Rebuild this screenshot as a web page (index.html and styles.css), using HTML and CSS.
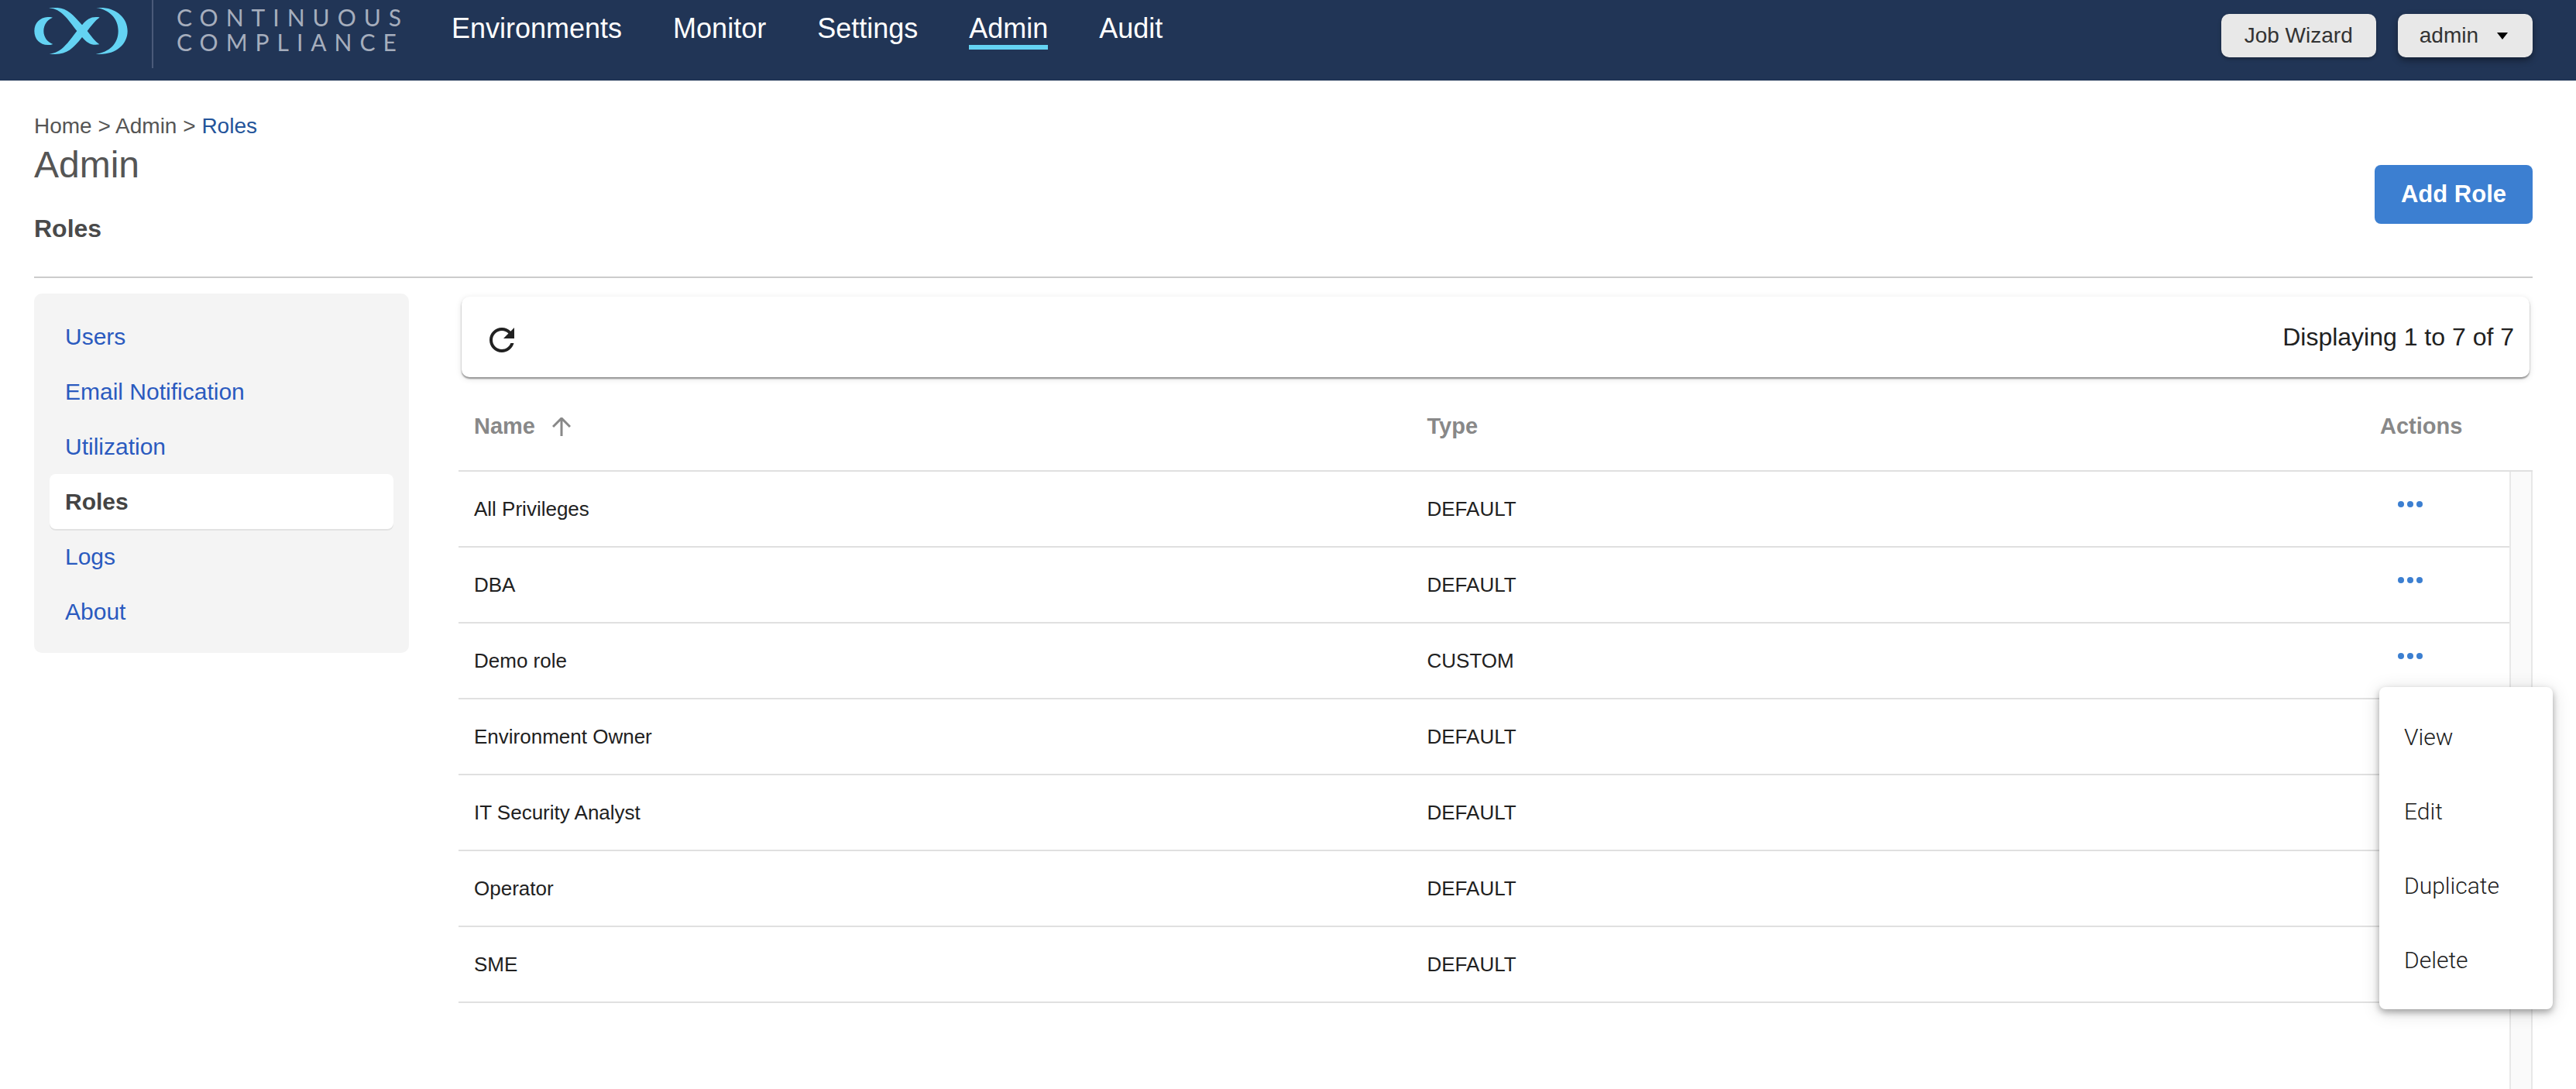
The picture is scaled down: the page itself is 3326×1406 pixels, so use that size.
FILE: index.html
```html
<!DOCTYPE html>
<html lang="en">
<head>
    <meta charset="UTF-8">
    <meta name="viewport" content="width=device-width, initial-scale=1.0">
    <title>Continuous Compliance - Roles</title>
    <link rel="stylesheet" href="styles.css">
</head>
<body>
    <svg width="0" height="0" class="icon-defs" aria-hidden="true">
        <symbol id="dots" viewBox="0 0 24 24">
            <circle cx="6" cy="12" r="2"/>
            <circle cx="12" cy="12" r="2"/>
            <circle cx="18" cy="12" r="2"/>
        </symbol>
    </svg>

    <header class="topbar">
        <a href="#" class="logo" aria-label="Home">
            <svg viewBox="0 0 361 180" width="121" height="60">
                <path d="M71 38C64 36 58 36 52 36C22 38 0 58 0 90C0 122 22 144 52 144C60 144 66 144 72 141C50 132 36 114 36 90C36 66 50 46 71 38Z"/>
                <path d="M58 0C120-5 140 15 185 67L205 90C222 112 235 130 252 142C222 147 205 138 185 114L165 90C130 45 105 5 58 1Z"/>
                <path d="M252 37C222 33 205 42 185 67L165 90C130 135 105 175 58 179C120 185 145 165 185 114L205 90C222 68 235 50 252 38Z"/>
                <path d="M240 0C310-6 361 35 361 90C361 145 310 186 238 179C290 172 325 140 325 90C325 40 290 8 240 0Z"/>
            </svg>
        </a>
        <div class="product">CONTINUOUS<br>COMPLIANCE</div>
        <nav class="main-nav">
            <a href="#">Environments</a>
            <a href="#">Monitor</a>
            <a href="#">Settings</a>
            <a href="#" class="active">Admin</a>
            <a href="#">Audit</a>
        </nav>
        <div class="topbar-actions">
            <button type="button" class="btn-top">Job Wizard</button>
            <button type="button" class="btn-top btn-user">admin <span class="caret"></span></button>
        </div>
    </header>

    <main class="page">
        <div class="page-header">
            <div>
                <div class="breadcrumb"><a href="#">Home</a> &gt; <a href="#">Admin</a> &gt; <a href="#" class="current">Roles</a></div>
                <h1>Admin</h1>
                <h2>Roles</h2>
            </div>
            <button type="button" class="btn-primary">Add Role</button>
        </div>

        <div class="content">
            <nav class="sidebar">
                <a href="#">Users</a>
                <a href="#">Email Notification</a>
                <a href="#">Utilization</a>
                <a href="#" class="active">Roles</a>
                <a href="#">Logs</a>
                <a href="#">About</a>
            </nav>

            <section class="roles">
                <div class="toolbar">
                    <button type="button" class="btn-icon" aria-label="Refresh">
                        <svg viewBox="0 0 24 24" width="48" height="48">
                            <path d="M17.65 6.35C16.2 4.9 14.21 4 12 4c-4.42 0-7.99 3.58-7.99 8s3.57 8 7.99 8c3.73 0 6.84-2.55 7.73-6h-2.08c-.82 2.33-3.04 4-5.65 4-3.31 0-6-2.69-6-6s2.69-6 6-6c1.66 0 3.14.69 4.22 1.78L13 11h7V4l-2.35 2.35z"/>
                        </svg>
                    </button>
                    <span class="count">Displaying 1 to 7 of 7</span>
                </div>

                <div class="grid">
                    <table>
                        <thead>
                            <tr>
                                <th>Name
                                    <svg class="sort" viewBox="0 0 24 24" width="24" height="24">
                                        <path d="M12 24V2M1 12L12 1L23 12"/>
                                    </svg>
                                </th>
                                <th>Type</th>
                                <th class="col-actions">Actions</th>
                            </tr>
                        </thead>
                        <tbody>
                            <tr>
                                <td>All Privileges</td>
                                <td>DEFAULT</td>
                                <td class="actions"><button type="button" class="btn-icon" aria-label="Actions"><svg width="48" height="48"><use href="#dots"/></svg></button></td>
                            </tr>
                            <tr>
                                <td>DBA</td>
                                <td>DEFAULT</td>
                                <td class="actions"><button type="button" class="btn-icon" aria-label="Actions"><svg width="48" height="48"><use href="#dots"/></svg></button></td>
                            </tr>
                            <tr>
                                <td>Demo role</td>
                                <td>CUSTOM</td>
                                <td class="actions">
                                    <div class="dropdown">
                                        <button type="button" class="btn-icon" aria-label="Actions"><svg width="48" height="48"><use href="#dots"/></svg></button>
                                        <div class="menu">
                                            <button type="button">View</button>
                                            <button type="button">Edit</button>
                                            <button type="button">Duplicate</button>
                                            <button type="button">Delete</button>
                                        </div>
                                    </div>
                                </td>
                            </tr>
                            <tr>
                                <td>Environment Owner</td>
                                <td>DEFAULT</td>
                                <td class="actions"><button type="button" class="btn-icon" aria-label="Actions"><svg width="48" height="48"><use href="#dots"/></svg></button></td>
                            </tr>
                            <tr>
                                <td>IT Security Analyst</td>
                                <td>DEFAULT</td>
                                <td class="actions"><button type="button" class="btn-icon" aria-label="Actions"><svg width="48" height="48"><use href="#dots"/></svg></button></td>
                            </tr>
                            <tr>
                                <td>Operator</td>
                                <td>DEFAULT</td>
                                <td class="actions"><button type="button" class="btn-icon" aria-label="Actions"><svg width="48" height="48"><use href="#dots"/></svg></button></td>
                            </tr>
                            <tr>
                                <td>SME</td>
                                <td>DEFAULT</td>
                                <td class="actions"><button type="button" class="btn-icon" aria-label="Actions"><svg width="48" height="48"><use href="#dots"/></svg></button></td>
                            </tr>
                        </tbody>
                    </table>
                    <div class="scroll">
                        <div class="scroll-head"></div>
                        <div class="scroll-track"></div>
                    </div>
                </div>
            </section>
        </div>
    </main>
</body>
</html>
```
FILE: styles.css
```css
* {
    box-sizing: border-box;
}
body {
    margin: 0;
    min-height: 100vh;
    display: flex;
    flex-direction: column;
    background: #fff;
    color: #212121;
    font-family: "Liberation Sans", Arial, sans-serif;
    font-size: 28px;
}
a {
    color: inherit;
    text-decoration: none;
}
button {
    font-family: inherit;
    border: none;
    cursor: pointer;
}
svg {
    display: block;
}
.icon-defs {
    position: absolute;
}

/* top bar */
.topbar {
    display: flex;
    align-items: flex-start;
    height: 104px;
    padding: 0 56px 0 44px;
    background: #213556;
    color: #fff;
}
.logo {
    padding-top: 10px;
    fill: #64d3f3;
}
.product {
    height: 88px;
    width: 354px;
    margin-left: 31px;
    padding: 6px 0 0 30px;
    border-left: 2px solid #4a5a79;
    font-family: Lato, sans-serif;
    font-size: 30px;
    line-height: 32px;
    letter-spacing: 10px;
    color: #a6aebd;
}
.main-nav {
    display: flex;
    gap: 66px;
    margin-left: 33px;
    padding-top: 16px;
    font-size: 36px;
    line-height: 42px;
}
.main-nav a.active {
    border-bottom: 6px solid #64d3f3;
}
.topbar-actions {
    display: flex;
    gap: 28px;
    margin-left: auto;
    padding-top: 18px;
}
.btn-top {
    height: 56px;
    padding: 0 30px;
    border-radius: 10px;
    background: #e8e8e8;
    color: #333;
    font-size: 28px;
    box-shadow: 0 2px 4px rgba(0, 0, 0, 0.3);
}
.btn-user {
    display: flex;
    align-items: center;
    gap: 24px;
    padding: 0 32px 0 28px;
    box-shadow: 0 4px 8px rgba(0, 0, 0, 0.4);
}
.caret {
    border: 7px solid transparent;
    border-top: 9px solid #000;
    border-bottom: none;
}

/* page header */
.page {
    flex: 1;
    display: flex;
    flex-direction: column;
    padding: 41px 56px 0 44px;
}
.page-header {
    display: flex;
    align-items: center;
    justify-content: space-between;
    border-bottom: 2px solid #ccc;
}
.breadcrumb {
    line-height: 36px;
    color: #555;
}
.breadcrumb .current {
    color: #24549a;
}
h1 {
    margin: 0;
    font-size: 48px;
    font-weight: normal;
    line-height: 64px;
    color: #555;
}
h2 {
    margin: 30px 0 42px;
    font-size: 32px;
    line-height: 40px;
    color: #4a4a4a;
}
.btn-primary {
    width: 204px;
    height: 76px;
    border-radius: 8px;
    background: #3c7fd1;
    color: #fff;
    font-size: 31px;
    font-weight: bold;
}

/* content */
.content {
    flex: 1;
    display: flex;
    align-items: stretch;
    gap: 64px;
    padding-top: 20px;
}
.sidebar {
    align-self: flex-start;
    width: 484px;
    padding: 20px 20px 18px;
    border-radius: 10px;
    background: #f4f4f4;
    font-size: 30px;
    line-height: 71px;
    color: #2a5abf;
}
.sidebar a {
    display: block;
    padding-left: 20px;
}
.sidebar a.active {
    border-radius: 8px;
    background: #fff;
    color: #444;
    font-weight: bold;
    box-shadow: 0 2px 0 #e2e2e2;
}
.roles {
    flex: 1;
    display: flex;
    flex-direction: column;
}
.toolbar {
    display: flex;
    align-items: center;
    justify-content: space-between;
    height: 104px;
    margin: 4px 4px 6px;
    padding: 0 20px 0 28px;
    border-radius: 10px;
    background: #fff;
    box-shadow: 0 2px 2px rgba(0, 0, 0, 0.4), 0 2px 8px rgba(0, 0, 0, 0.12);
}
.btn-icon {
    padding: 0;
    background: none;
    fill: #212121;
}
.toolbar .btn-icon {
    padding-top: 8px;
}
.count {
    font-size: 32px;
}

/* roles table */
.grid {
    flex: 1;
    display: flex;
}
table {
    width: 100%;
    align-self: flex-start;
    table-layout: fixed;
    border-collapse: separate;
    border-spacing: 0;
}
th {
    height: 116px;
    padding: 0 20px;
    border-bottom: 2px solid #e0e0e0;
    color: #888;
    font-size: 29px;
    text-align: left;
}
.sort {
    display: inline-block;
    margin-left: 14px;
    vertical-align: -3px;
    fill: none;
    stroke: #888;
    stroke-width: 3;
}
.col-actions {
    width: 187px;
}
td {
    height: 98px;
    padding: 0 20px;
    border-bottom: 2px solid #e0e0e0;
    font-size: 26px;
}
td.actions {
    padding: 18px 0 0 35px;
    vertical-align: top;
}
.actions .btn-icon {
    display: block;
    fill: #3c7fd1;
}
.scroll {
    display: flex;
    flex-direction: column;
    flex: 0 0 30px;
}
.scroll-head {
    height: 116px;
    border-bottom: 2px solid #e0e0e0;
}
.scroll-track {
    flex: 1;
    border: 2px solid #e8e8e8;
    border-width: 0 2px;
    background: #fafafa;
}

/* row menu */
.dropdown {
    position: relative;
}
.menu {
    position: absolute;
    top: 64px;
    left: -16px;
    z-index: 10;
    width: 224px;
    padding: 16px 0;
    border-radius: 8px;
    background: #fff;
    box-shadow: 0 4px 8px rgba(0, 0, 0, 0.3), 0 4px 24px rgba(0, 0, 0, 0.14);
}
.menu button {
    display: block;
    width: 100%;
    height: 96px;
    padding: 0 32px;
    background: none;
    color: #212121;
    font-family: Roboto, sans-serif;
    font-size: 30px;
    font-weight: 300;
    text-align: left;
}
```
